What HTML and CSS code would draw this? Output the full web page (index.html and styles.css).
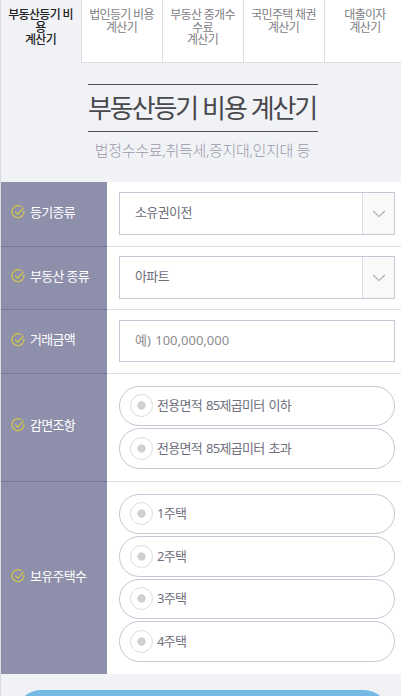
FILE: index.html
```
<!DOCTYPE html>
<html lang="ko">
<head>
    <meta charset="UTF-8">
    <meta name="viewport" content="width=device-width, initial-scale=1.0">
    <title>부동산등기 비용 계산기</title>
    <link rel="stylesheet" href="styles.css">
</head>
<body>
    <svg class="defs">
        <symbol id="check" viewBox="0 0 14 14">
            <path d="M10.6 1.9A6 6 0 1 0 12.8 5.6"/>
            <path d="M4.1 6.6l2.7 2.6 5.9-6.6"/>
        </symbol>
        <symbol id="arrow" viewBox="0 0 14 8">
            <path d="M1.2 1l5.8 5.6L12.8 1"/>
        </symbol>
    </svg>
    <div class="wrap">
        <nav class="tabs">
            <a class="tab on">부동산등기 비<br>용<br>계산기</a>
            <a class="tab">법인등기 비용<br>계산기</a>
            <a class="tab">부동산 중개수<br>수료<br>계산기</a>
            <a class="tab">국민주택 채권<br>계산기</a>
            <a class="tab">대출이자<br>계산기</a>
        </nav>
        <header class="title">
            <h2>부동산등기 비용 계산기</h2>
            <p>법정수수료,취득세,증지대,인지대 등</p>
        </header>
        <form class="form">
            <div class="row">
                <div class="label"><svg class="check"><use href="#check"/></svg>등기종류</div>
                <div class="field">
                    <div class="select"><span>소유권이전</span><i><svg class="arrow"><use href="#arrow"/></svg></i></div>
                </div>
            </div>
            <div class="row">
                <div class="label"><svg class="check"><use href="#check"/></svg>부동산 종류</div>
                <div class="field">
                    <div class="select"><span>아파트</span><i><svg class="arrow"><use href="#arrow"/></svg></i></div>
                </div>
            </div>
            <div class="row">
                <div class="label"><svg class="check"><use href="#check"/></svg>거래금액</div>
                <div class="field">
                    <input class="price" type="text" placeholder="예) 100,000,000">
                </div>
            </div>
            <div class="row area">
                <div class="label"><svg class="check"><use href="#check"/></svg>감면조항</div>
                <div class="field">
                    <label class="radio"><b></b><span>전용면적 85제곱미터 이하</span></label>
                    <label class="radio"><b></b><span>전용면적 85제곱미터 초과</span></label>
                </div>
            </div>
            <div class="row house">
                <div class="label"><svg class="check"><use href="#check"/></svg>보유주택수</div>
                <div class="field">
                    <label class="radio"><b></b><span>1주택</span></label>
                    <label class="radio"><b></b><span>2주택</span></label>
                    <label class="radio"><b></b><span>3주택</span></label>
                    <label class="radio"><b></b><span>4주택</span></label>
                </div>
            </div>
        </form>
        <div class="submit"></div>
    </div>
</body>
</html>
```
FILE: styles.css
```
* {
    margin: 0;
    padding: 0;
    box-sizing: border-box;
}

body {
    height: 696px;
    overflow: hidden;
    background: #f1f2f6;
    font-family: "Noto Sans", "Noto Sans CJK KR", sans-serif;
}
.defs {
    display: none;
}
.wrap {
    height: 696px;
    overflow: hidden;
    border-left: 1px solid #dcdde3;
}
.tabs {
    display: flex;
    height: 63px;
}
.tab {
    width: 81px;
    padding: 9px 1px 0 0;
    background: #fff;
    border-right: 1px solid #dcdde3;
    border-bottom: 1px solid #dcdde3;
    color: #808086;
    font-size: 12px;
    line-height: 12.7px;
    letter-spacing: -0.7px;
    text-align: center;
    white-space: nowrap;
}
.tab.on {
    background: #f1f2f6;
    border-bottom: none;
    color: #222;
    font-weight: 500;
}
.tab:last-child {
    flex: 1;
    padding: 9px 0 0 4px;
    border-right: none;
}
.title {
    height: 119px;
    padding-top: 21px;
    text-align: center;
}
.title h2 {
    width: 230px;
    height: 48px;
    margin: 0 0 0 87px;
    padding-right: 2px;
    border-top: 1px solid #55555b;
    border-bottom: 1px solid #55555b;
    color: #48484d;
    font-size: 26px;
    font-weight: 400;
    line-height: 47px;
    letter-spacing: -2.1px;
    word-spacing: 0.3px;
    white-space: nowrap;
}
.title p {
    margin-top: 6px;
    padding-left: 3px;
    color: #9a9aab;
    font-size: 15px;
    font-weight: 300;
    line-height: 24px;
    letter-spacing: -0.3px;
}
.row {
    display: flex;
    height: 64px;
    background: #fff;
    border-bottom: 1px solid #dcdce2;
}
.row:first-child {
    height: 65px;
}
.row:nth-child(2) {
    height: 63px;
}
.row.area {
    height: 108px;
}
.row.house {
    height: 192px;
    border-bottom: none;
}
.label {
    display: flex;
    align-items: center;
    width: 106px;
    margin-bottom: -1px;
    padding: 0 0 4px 10px;
    background: #8e8fab;
    border-bottom: 1px solid #787992;
    color: #fff;
    font-size: 13px;
    line-height: 15px;
    letter-spacing: -0.7px;
    white-space: nowrap;
}
.area .label {
    padding-bottom: 5px;
}
.house .label {
    margin-bottom: 0;
    border-bottom: none;
}
.check {
    width: 14px;
    height: 14px;
    margin-right: 5px;
    fill: none;
    stroke: #d3c74c;
    stroke-width: 1.2;
}
.field {
    flex: 1;
    padding: 10px 6px 0 12px;
}
.row:nth-child(2) .field {
    padding-top: 9px;
}
.select {
    display: flex;
    height: 43px;
    border: 1px solid #c5c6d6;
    color: #6f6f7c;
    font-size: 13px;
    line-height: 39px;
    letter-spacing: -0.6px;
}
.select span {
    flex: 1;
    padding-left: 15px;
}
.select i {
    display: flex;
    align-items: center;
    justify-content: center;
    width: 32px;
    background: #f9f9f9;
    border-left: 1px solid #dcdce2;
}
.arrow {
    width: 14px;
    height: 8px;
    fill: none;
    stroke: #aaa;
    stroke-width: 1.1;
}
.price {
    display: block;
    width: 100%;
    height: 42px;
    padding: 0 15px 2px;
    border: 1px solid #c5c6d6;
    outline: none;
    font-family: "Noto Sans", "Noto Sans CJK KR", sans-serif;
    font-size: 13px;
    word-spacing: 1px;
}
.price::placeholder {
    color: #8d8d92;
}
.area .field,
.house .field {
    padding-top: 11.5px;
}
.radio {
    display: flex;
    align-items: center;
    height: 40.5px;
    margin-bottom: 2px;
    padding-left: 10px;
    border: 1px solid #c5c6d6;
    border-radius: 21px;
    color: #6f6f7c;
    font-size: 13px;
    line-height: 16px;
    letter-spacing: -0.7px;
    word-spacing: 1.3px;
}
.radio b {
    width: 23px;
    height: 23px;
    margin-right: 4px;
    border: 1px solid #dcdcdc;
    border-radius: 50%;
    background: radial-gradient(circle, #d0d0d0 3.8px, #fff 4.5px);
}
.radio span {
    padding-bottom: 1px;
}
.submit {
    height: 50px;
    margin: 16px 12px 0 15px;
    border-radius: 25px;
    background: #75b9e5;
}
```
